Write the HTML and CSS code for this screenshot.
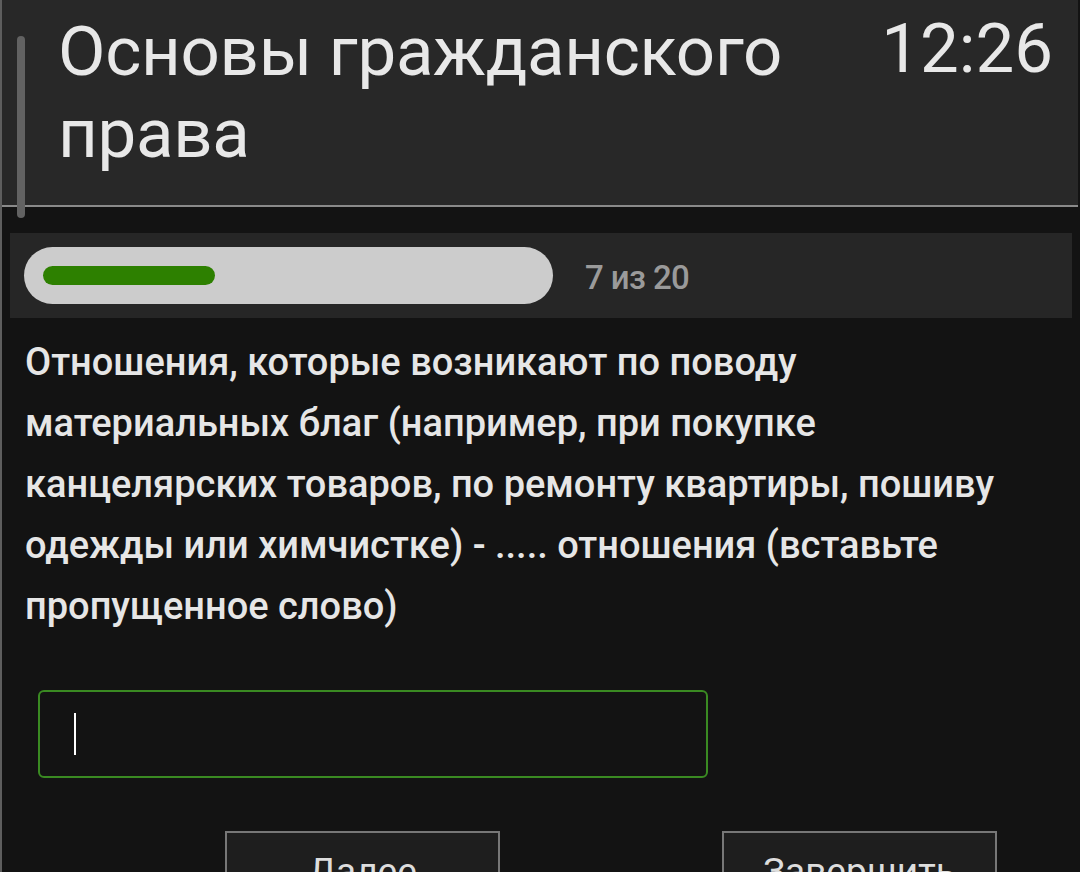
FILE: index.html
```html
<!DOCTYPE html>
<html lang="ru">
<head>
    <meta charset="utf-8">
    <meta name="viewport" content="width=device-width, initial-scale=1.0">
    <title>Основы гражданского права</title>
    <link rel="stylesheet" href="styles.css">
</head>
<body>
    <div class="screen">
        <div class="scroll-thumb"></div>

        <header class="top-bar">
            <h1 class="course-title">Основы гражданского права</h1>
            <div class="clock">12:26</div>
        </header>

        <div class="progress-row">
            <div class="progress-track">
                <div class="progress-fill"></div>
            </div>
            <span class="progress-count">7 из 20</span>
        </div>

        <p class="question">
            Отношения, которые возникают по поводу материальных благ (например, при покупке канцелярских товаров, по ремонту квартиры, пошиву одежды или химчистке) - ..... отношения (вставьте пропущенное слово)
        </p>

        <div class="answer-box">
            <span class="caret"></span>
        </div>

        <div class="actions">
            <button class="btn">Далее</button>
            <button class="btn">Завершить</button>
        </div>
    </div>
</body>
</html>
```

FILE: styles.css
```css
html, body {
    margin: 0;
    padding: 0;
    height: 100%;
    overflow: hidden;
}

body {
    background: #131313;
    font-family: Roboto, 'Noto Sans', sans-serif;
    color: #e6e6e6;
}

.screen {
    position: relative;
    min-height: 100%;
    border-left: 2px solid #5e5e5e;
    box-sizing: border-box;
}

/* overlay scrollbar on the left */
.scroll-thumb {
    position: absolute;
    left: 15px;
    top: 36px;
    width: 8px;
    height: 182px;
    border-radius: 4px;
    background: #626262;
}

.top-bar {
    display: flex;
    align-items: flex-start;
    background: #282828;
    padding: 11px 25px 30px 56px;
    margin-right: 2px;
    border-bottom: 2px solid #8a8a8a;
}

.course-title {
    flex: 1;
    margin: 0;
    font-size: 69px;
    line-height: 82px;
    font-weight: 400;
    letter-spacing: -0.3px;
    color: #e8e8e8;
}

.clock {
    font-size: 69px;
    line-height: 82px;
    margin-top: -3px;
    color: #e8e8e8;
}

.progress-row {
    display: flex;
    align-items: center;
    margin: 26px 8px 0 8px;
    padding: 14px 14px;
    background: #262626;
}

.progress-track {
    width: 529px;
    height: 57px;
    border-radius: 29px;
    background: #cccccc;
    padding: 19px;
    box-sizing: border-box;
}

.progress-fill {
    width: 172px;
    height: 19px;
    border-radius: 10px;
    background: #2d8000;
}

.progress-count {
    margin-left: 32px;
    margin-top: 3px;
    font-size: 33px;
    font-weight: 500;
    letter-spacing: -0.6px;
    color: #9a9a9a;
}

.question {
    margin: 14px 50px 0 23px;
    font-size: 38px;
    line-height: 61px;
    font-weight: 500;
    color: #e6e6e6;
}

.answer-box {
    display: flex;
    align-items: center;
    width: 670px;
    height: 88px;
    margin: 53px 0 0 36px;
    padding-left: 34px;
    box-sizing: border-box;
    border: 2px solid #3a8a22;
    border-radius: 6px;
}

.caret {
    width: 2px;
    height: 42px;
    background: #ffffff;
}

.actions {
    display: flex;
    gap: 222px;
    margin: 53px 0 0 223px;
}

.btn {
    width: 275px;
    padding: 17px 0 40px;
    background: #1e1e1e;
    border: 2px solid #777777;
    border-radius: 0;
    font-family: Roboto, 'Noto Sans', sans-serif;
    font-size: 37px;
    line-height: 43px;
    color: #dddddd;
}
```
